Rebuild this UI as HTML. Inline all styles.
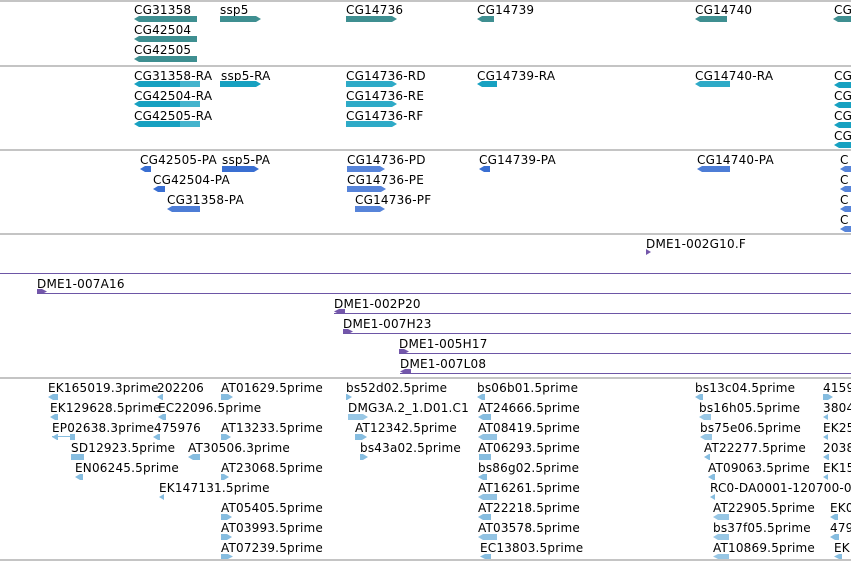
<!DOCTYPE html>
<html><head><meta charset="utf-8"><style>
html,body{margin:0;padding:0;background:#fff;width:851px;height:562px;overflow:hidden;font-family:"DejaVu Sans","Liberation Sans",sans-serif;font-size:12px;color:#000}
#w{position:absolute;left:0;top:0;width:851px;height:562px;overflow:hidden}
#w div{position:absolute}
.t{line-height:14px;white-space:nowrap;margin-top:2px;letter-spacing:0.2px}
.s{left:0;width:851px;height:0;border-top:2px solid #c4c4c4}
.p{height:0;border-top:1px solid #6d56a6;right:0}
.b{height:6px}
.L{clip-path:polygon(0 50%,5px 0,100% 0,100% 100%,5px 100%)}
.R{clip-path:polygon(0 0,calc(100% - 5px) 0,100% 50%,calc(100% - 5px) 100%,0 100%)}
.g{background:#3f8f91}.c{background:#17a1c1}.u{background:#3a6fd2}.e{background:#86bde0}.v{background:#7356aa}
.th{height:2px;margin-top:2px}
</style></head><body><div id="w">
<div class="s" style="top:0"></div>
<div class="s" style="top:65px"></div>
<div class="s" style="top:149px"></div>
<div class="s" style="top:233px"></div>
<div class="s" style="top:377px"></div>
<div class="s" style="top:559px"></div>

<div class="t" style="left:134px;top:1px">CG31358</div><div class="b g L" style="left:134px;top:16px;width:63px"></div>
<div class="t" style="left:134px;top:21px">CG42504</div><div class="b g L" style="left:134px;top:36px;width:63px"></div>
<div class="t" style="left:134px;top:41px">CG42505</div><div class="b g L" style="left:134px;top:56px;width:63px"></div>
<div class="t" style="left:220px;top:1px">ssp5</div><div class="b g R" style="left:220px;top:16px;width:41px"></div>
<div class="t" style="left:346px;top:1px">CG14736</div><div class="b g R" style="left:346px;top:16px;width:51px"></div>
<div class="t" style="left:477px;top:1px">CG14739</div><div class="b g L" style="left:477px;top:16px;width:17px"></div>
<div class="t" style="left:695px;top:1px">CG14740</div><div class="b g L" style="left:695px;top:16px;width:32px"></div>
<div class="t" style="left:834px;top:1px">CG</div><div class="b g L" style="left:833px;top:16px;width:20px"></div>

<div class="t" style="left:134px;top:67px">CG31358-RA</div><div class="b c L" style="left:134px;top:81px;width:46px"></div><div class="b c" style="left:180px;top:81px;width:20px;opacity:.8"></div>
<div class="t" style="left:134px;top:87px">CG42504-RA</div><div class="b c L" style="left:134px;top:101px;width:46px"></div><div class="b c" style="left:180px;top:101px;width:20px;opacity:.8"></div>
<div class="t" style="left:134px;top:107px">CG42505-RA</div><div class="b c L" style="left:134px;top:121px;width:46px"></div><div class="b c" style="left:180px;top:121px;width:20px;opacity:.8"></div>
<div class="t" style="left:221px;top:67px">ssp5-RA</div><div class="b c R" style="left:220px;top:81px;width:41px"></div>
<div class="t" style="left:346px;top:67px">CG14736-RD</div><div class="b c R" style="left:346px;top:81px;width:51px;opacity:.9"></div>
<div class="t" style="left:346px;top:87px">CG14736-RE</div><div class="b c R" style="left:346px;top:101px;width:51px;opacity:.9"></div>
<div class="t" style="left:346px;top:107px">CG14736-RF</div><div class="b c R" style="left:346px;top:121px;width:51px;opacity:.9"></div>
<div class="t" style="left:477px;top:67px">CG14739-RA</div><div class="b c L" style="left:477px;top:81px;width:20px"></div>
<div class="t" style="left:695px;top:67px">CG14740-RA</div><div class="b c L" style="left:695px;top:81px;width:35px;opacity:.9"></div>
<div class="t" style="left:834px;top:67px">CG</div><div class="b c L" style="left:834px;top:82px;width:20px"></div>
<div class="t" style="left:834px;top:87px">CG</div><div class="b c L" style="left:834px;top:102px;width:20px"></div>
<div class="t" style="left:834px;top:107px">CG</div><div class="b c L" style="left:834px;top:122px;width:20px"></div>
<div class="t" style="left:834px;top:127px">CG</div><div class="b c L" style="left:834px;top:142px;width:20px"></div>

<div class="t" style="left:140px;top:151px">CG42505-PA</div><div class="b u L" style="left:140px;top:166px;width:11px"></div>
<div class="t" style="left:153px;top:171px">CG42504-PA</div><div class="b u L" style="left:153px;top:186px;width:12px"></div>
<div class="t" style="left:167px;top:191px">CG31358-PA</div><div class="b u L" style="left:167px;top:206px;width:33px;opacity:.9"></div>
<div class="t" style="left:222px;top:151px">ssp5-PA</div><div class="b u R" style="left:222px;top:166px;width:37px"></div>
<div class="t" style="left:347px;top:151px">CG14736-PD</div><div class="b u R" style="left:347px;top:166px;width:38px;opacity:.85"></div>
<div class="t" style="left:347px;top:171px">CG14736-PE</div><div class="b u R" style="left:347px;top:186px;width:39px;opacity:.85"></div>
<div class="t" style="left:355px;top:191px">CG14736-PF</div><div class="b u R" style="left:355px;top:206px;width:30px;opacity:.85"></div>
<div class="t" style="left:479px;top:151px">CG14739-PA</div><div class="b u L" style="left:479px;top:166px;width:11px"></div>
<div class="t" style="left:697px;top:151px">CG14740-PA</div><div class="b u L" style="left:697px;top:166px;width:33px;opacity:.9"></div>
<div class="t" style="left:840px;top:151px">C</div><div class="b u L" style="left:840px;top:166px;width:14px;opacity:.85"></div>
<div class="t" style="left:840px;top:171px">C</div><div class="b u L" style="left:840px;top:186px;width:14px;opacity:.85"></div>
<div class="t" style="left:840px;top:191px">C</div><div class="b u L" style="left:840px;top:206px;width:14px;opacity:.85"></div>
<div class="t" style="left:840px;top:211px">C</div><div class="b u L" style="left:840px;top:226px;width:14px;opacity:.85"></div>

<div class="t" style="left:646px;top:235px">DME1-002G10.F</div><div class="b v" style="left:646px;top:249px;width:5px;clip-path:polygon(0 0,100% 50%,0 100%)"></div>
<div class="p" style="left:0;top:273px"></div>
<div class="t" style="left:37px;top:275px">DME1-007A16</div><div class="b v R" style="left:37px;top:289px;width:10px;height:5px"></div><div class="p" style="left:37px;top:293px"></div>
<div class="t" style="left:334px;top:295px">DME1-002P20</div><div class="b v L" style="left:334px;top:309px;width:11px;height:5px"></div><div class="p" style="left:334px;top:313px"></div>
<div class="t" style="left:343px;top:315px">DME1-007H23</div><div class="b v R" style="left:343px;top:329px;width:10px;height:5px"></div><div class="p" style="left:343px;top:333px"></div>
<div class="t" style="left:399px;top:335px">DME1-005H17</div><div class="b v R" style="left:399px;top:349px;width:10px;height:5px"></div><div class="p" style="left:399px;top:353px"></div>
<div class="t" style="left:400px;top:355px">DME1-007L08</div><div class="b v L" style="left:400px;top:369px;width:11px;height:5px"></div><div class="p" style="left:400px;top:373px"></div>

<div class="t" style="left:48px;top:379px">EK165019.3prime</div><div class="b e L" style="left:48px;top:394px;width:10px"></div>
<div class="t" style="left:50px;top:399px">EK129628.5prime</div><div class="b e L" style="left:50px;top:414px;width:8px"></div>
<div class="t" style="left:52px;top:419px">EP02638.3prime</div><div class="p" style="left:52px;top:436px;width:23px;border-color:#86bde0;right:auto"></div><div class="b e L" style="left:52px;top:434px;width:6px"></div><div class="b e" style="left:70px;top:434px;width:5px"></div>
<div class="t" style="left:71px;top:439px">SD12923.5prime</div><div class="b e" style="left:71px;top:454px;width:13px"></div>
<div class="t" style="left:75px;top:459px">EN06245.5prime</div><div class="b e L" style="left:75px;top:474px;width:8px"></div>
<div class="t" style="left:157px;top:379px">202206</div><div class="b e L" style="left:157px;top:394px;width:6px"></div>
<div class="t" style="left:158px;top:399px">EC22096.5prime</div><div class="b e L" style="left:158px;top:414px;width:8px"></div>
<div class="t" style="left:154px;top:419px">475976</div><div class="b e L" style="left:153px;top:434px;width:7px"></div>
<div class="t" style="left:188px;top:439px">AT30506.3prime</div><div class="b e L" style="left:188px;top:454px;width:12px"></div>
<div class="t" style="left:159px;top:479px">EK147131.5prime</div><div class="b e L" style="left:159px;top:494px;width:5px"></div>
<div class="t" style="left:221px;top:379px">AT01629.5prime</div><div class="b e R" style="left:221px;top:394px;width:12px"></div>
<div class="t" style="left:221px;top:419px">AT13233.5prime</div><div class="b e R" style="left:221px;top:434px;width:10px"></div>
<div class="t" style="left:221px;top:459px">AT23068.5prime</div><div class="b e R" style="left:221px;top:474px;width:8px"></div>
<div class="t" style="left:221px;top:499px">AT05405.5prime</div><div class="b e R" style="left:221px;top:514px;width:11px"></div>
<div class="t" style="left:221px;top:519px">AT03993.5prime</div><div class="b e R" style="left:221px;top:534px;width:11px"></div>
<div class="t" style="left:221px;top:539px">AT07239.5prime</div><div class="b e R" style="left:221px;top:554px;width:12px;height:5px"></div>
<div class="t" style="left:346px;top:379px">bs52d02.5prime</div><div class="b e R" style="left:346px;top:394px;width:6px"></div>
<div class="t" style="left:348px;top:399px">DMG3A.2_1.D01.C1</div><div class="b e R" style="left:348px;top:414px;width:20px;opacity:.85"></div>
<div class="t" style="left:355px;top:419px">AT12342.5prime</div><div class="b e R" style="left:355px;top:434px;width:12px"></div>
<div class="t" style="left:360px;top:439px">bs43a02.5prime</div><div class="b e R" style="left:360px;top:454px;width:8px"></div>
<div class="t" style="left:477px;top:379px">bs06b01.5prime</div><div class="b e L" style="left:477px;top:394px;width:8px"></div>
<div class="t" style="left:478px;top:399px">AT24666.5prime</div><div class="b e L" style="left:478px;top:414px;width:13px"></div>
<div class="t" style="left:478px;top:419px">AT08419.5prime</div><div class="b e L" style="left:478px;top:434px;width:19px;opacity:.9"></div>
<div class="t" style="left:478px;top:439px">AT06293.5prime</div><div class="b e" style="left:479px;top:454px;width:12px"></div>
<div class="t" style="left:478px;top:459px">bs86g02.5prime</div><div class="b e L" style="left:478px;top:474px;width:9px"></div>
<div class="t" style="left:478px;top:479px">AT16261.5prime</div><div class="b e L" style="left:478px;top:494px;width:19px;opacity:.9"></div>
<div class="t" style="left:478px;top:499px">AT22218.5prime</div><div class="b e L" style="left:478px;top:514px;width:13px"></div>
<div class="t" style="left:478px;top:519px">AT03578.5prime</div><div class="b e L" style="left:478px;top:534px;width:19px;opacity:.9"></div>
<div class="t" style="left:480px;top:539px">EC13803.5prime</div><div class="b e L" style="left:480px;top:554px;width:11px;height:5px"></div>
<div class="t" style="left:695px;top:379px">bs13c04.5prime</div><div class="b e L" style="left:695px;top:394px;width:8px"></div>
<div class="t" style="left:699px;top:399px">bs16h05.5prime</div><div class="b e L" style="left:699px;top:414px;width:12px;opacity:.85"></div>
<div class="t" style="left:700px;top:419px">bs75e06.5prime</div><div class="b e L" style="left:700px;top:434px;width:12px;opacity:.85"></div>
<div class="t" style="left:704px;top:439px">AT22277.5prime</div><div class="b e L" style="left:704px;top:454px;width:6px"></div>
<div class="t" style="left:708px;top:459px">AT09063.5prime</div><div class="b e L" style="left:708px;top:474px;width:7px"></div>
<div class="t" style="left:710px;top:479px;width:141px;overflow:hidden">RC0-DA0001-120700-021</div><div class="b e L" style="left:710px;top:494px;width:5px"></div>
<div class="t" style="left:713px;top:499px">AT22905.5prime</div><div class="b e L" style="left:713px;top:514px;width:16px;opacity:.85"></div>
<div class="t" style="left:713px;top:519px">bs37f05.5prime</div><div class="b e L" style="left:713px;top:534px;width:16px;opacity:.85"></div>
<div class="t" style="left:713px;top:539px">AT10869.5prime</div><div class="b e L" style="left:713px;top:554px;width:16px;height:5px;opacity:.85"></div>
<div class="t" style="left:823px;top:379px">4159</div><div class="b e R" style="left:823px;top:394px;width:10px"></div>
<div class="t" style="left:823px;top:399px">3804</div><div class="b e L" style="left:823px;top:414px;width:5px"></div>
<div class="t" style="left:823px;top:419px">EK25</div><div class="b e L" style="left:823px;top:434px;width:5px"></div>
<div class="t" style="left:823px;top:439px">2038</div><div class="b e L" style="left:823px;top:454px;width:6px"></div>
<div class="t" style="left:823px;top:459px">EK15</div><div class="b e L" style="left:823px;top:474px;width:5px"></div>
<div class="t" style="left:830px;top:499px">EK0</div><div class="b e L" style="left:830px;top:514px;width:8px"></div>
<div class="t" style="left:830px;top:519px">479</div><div class="b e L" style="left:830px;top:534px;width:9px"></div>
<div class="t" style="left:834px;top:539px">EK</div><div class="b e L" style="left:834px;top:554px;width:8px;height:5px"></div>
</div></body></html>
